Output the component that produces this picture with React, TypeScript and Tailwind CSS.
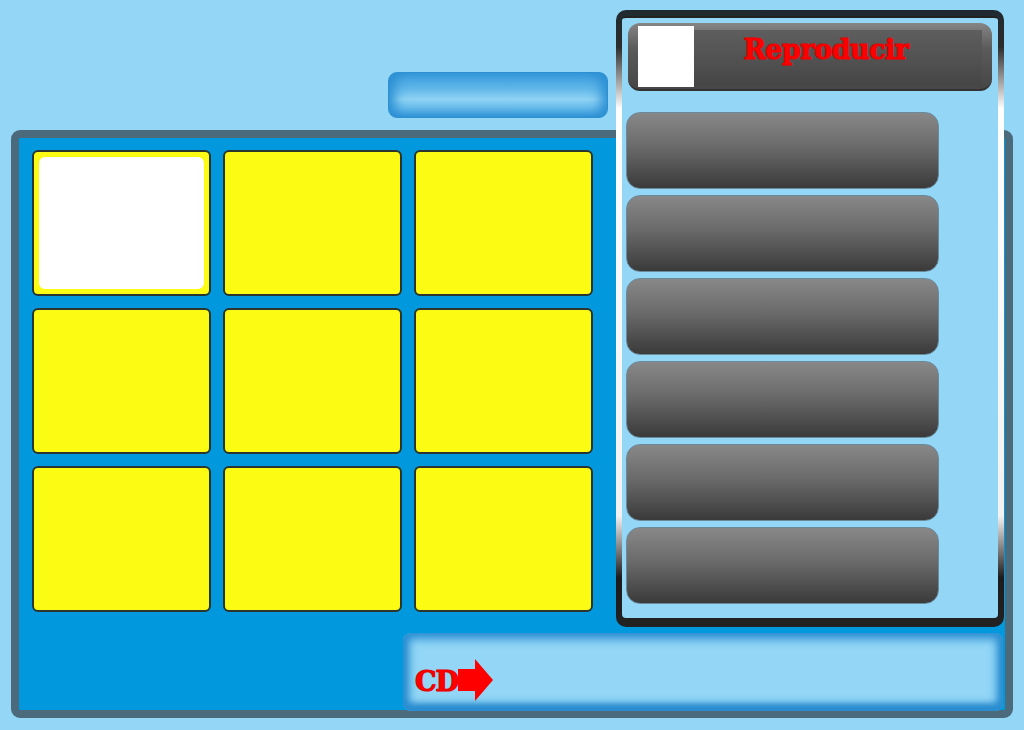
import React from "react";

function Tile({ selected }: { selected?: boolean }) {
  return (
    <div className="h-[146px] w-[179px] rounded-[6px] border-2 border-[#2b3530] bg-[#fbfb14] p-[5px]">
      {selected && <div className="h-full w-full rounded-[6px] bg-white" />}
    </div>
  );
}

function DarkButton() {
  return (
    <div className="h-[77px] w-[313px] rounded-[14px] border border-[#6a8a9a] bg-[linear-gradient(to_bottom,#888888_0%,#6a6a6a_45%,#3a3a3a_100%)]" />
  );
}

function Arrow() {
  return (
    <svg width="36" height="42" viewBox="0 0 36 42" className="block">
      <path d="M0 10 H17 V0 L35 21 L17 42 V32 H0 Z" fill="#ff0000" />
    </svg>
  );
}

export default function App() {
  return (
    <div className="relative h-[730px] w-[1024px] overflow-hidden bg-[#93d6f6] font-['DejaVu_Serif',serif]">
      <div className="flex flex-col pt-[72px]">
        {/* top tab */}
        <div className="ml-[388px] h-[46px] w-[220px] rounded-[9px] border border-[#2f8fd0] bg-[linear-gradient(to_bottom,#3a9bdb_0%,#5fb6e8_35%,#8fd3f4_60%,#5ab2e6_85%,#3596d6_100%)] shadow-[inset_10px_0_12px_-4px_#2b8fd3,inset_-10px_0_12px_-4px_#2b8fd3]" />

        {/* main panel */}
        <div className="ml-[11px] mt-[12px] h-[588px] w-[1002px] rounded-[9px] border-[8px] border-[#4b6a7c] bg-[#0298dd]">
          <div className="flex flex-col pl-[13px] pt-[12px]">
            <div className="grid grid-cols-[179px_179px_179px] gap-x-[12px] gap-y-[12px]">
              <Tile selected />
              <Tile />
              <Tile />
              <Tile />
              <Tile />
              <Tile />
              <Tile />
              <Tile />
              <Tile />
            </div>
            <div className="ml-[371px] mt-[21px] flex h-[78px] w-[600px] items-center rounded-[8px] bg-[#93d6f6] pl-[12px] pt-[16px] shadow-[inset_0_0_10px_6px_#2a8fd2,inset_0_-4px_6px_2px_#2580c4]">
              <span className="pt-[2px] text-[27px] font-bold leading-none tracking-[-1px] text-[#ff0000] [-webkit-text-stroke:1px_#ee0000] [text-shadow:0_0_1px_#8a0000]">
                CD
              </span>
              <Arrow />
            </div>
          </div>
        </div>
      </div>

      {/* right panel */}
      <div className="absolute left-[616px] top-[10px] h-[617px] w-[388px] rounded-[10px] bg-[linear-gradient(to_bottom,#1f2a30_0%,#2c2c2c_6%,#ffffff_16%,#f2f2f2_82%,#1c1c1c_92%,#222222_100%)] px-[6px] pb-[9px] pt-[6px]">
        <div className="flex h-full w-full flex-col rounded-[4px] border-t-[2px] border-[#222] bg-[#93d6f6]">
          {/* header */}
          <div className="relative ml-[6px] mt-[5px] h-[68px] w-[364px] rounded-[12px] border-b-[2px] border-[#333] bg-[linear-gradient(to_bottom,#858585_0%,#5a5a5a_40%,#464646_100%)]">
            <div className="absolute left-[10px] top-[3px] h-[61px] w-[56px] bg-white" />
            <div className="absolute left-[66px] top-[7px] flex h-[55px] w-[288px] justify-center bg-[linear-gradient(to_bottom,#5e5e5e_0%,#505050_60%,#454545_100%)] pr-[24px] pt-[6px]">
              <span className="text-[27px] font-bold leading-none tracking-[-0.5px] text-[#ff0000] [-webkit-text-stroke:1px_#ee0000] [text-shadow:0_0_1px_#8a0000]">
                Reproducir
              </span>
            </div>
          </div>
          {/* list */}
          <div className="ml-[4px] mt-[21px] flex flex-col gap-[6px]">
            <DarkButton />
            <DarkButton />
            <DarkButton />
            <DarkButton />
            <DarkButton />
            <DarkButton />
          </div>
        </div>
      </div>
    </div>
  );
}
